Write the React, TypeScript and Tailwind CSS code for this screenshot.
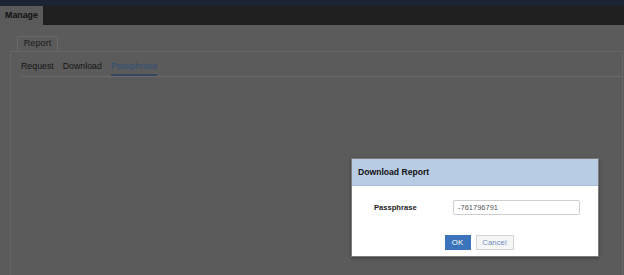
import React from "react";

export default function App() {
  return (
    <div
      className="relative h-[275px] w-[624px] overflow-hidden bg-[#5b5b5b] text-[#151515]"
      style={{ fontFamily: '"Liberation Sans", Arial, sans-serif' }}
    >
      {/* top navy strip */}
      <div className="h-[6px] bg-[#1b2434]" />
      {/* nav bar */}
      <div className="flex h-[19px] bg-[#1f1f1f]">
        <div className="flex w-[43px] items-center justify-center bg-[#5a5a5a] text-[8.8px] font-bold text-[#111]">
          Manage
        </div>
      </div>

      {/* content area */}
      <div className="flex h-[250px] flex-col pl-[10px] pt-[11px] pr-[1px]">
        <div className="flex pl-[7px]">
          <div className="flex h-[15px] w-[41px] items-center justify-center rounded-t-[2px] border border-b-0 border-[#6a6a6a] text-[9.2px] text-[#1c1c1c]">
            Report
          </div>
        </div>
        <div className="flex flex-1 flex-col border-l border-t border-r border-[#666666]">
          <div className="ml-[10px] flex h-[25px] items-end gap-[9px] border-b border-[#6a6a6a] text-[8.8px]">
            <div className="pb-[3px] text-[#151515]">Request</div>
            <div className="pb-[3px] text-[#151515]">Download</div>
            <div className="border-b-[2px] border-[#34495f] pb-[1px] text-[#30507a]">
              Passphrase
            </div>
          </div>
        </div>
      </div>

      {/* dialog */}
      <div className="absolute left-[351px] top-[158px] flex h-[99px] w-[248px] flex-col border border-[#7d7d7d] bg-white shadow-[0_1px_3px_rgba(0,0,0,0.35)]">
        <div className="flex h-[27px] items-center border-b border-[#a7bcd8] bg-[#b8cce4] pl-[6px] text-[8.6px] font-bold text-[#111]">
          Download Report
        </div>
        <div className="flex items-center pt-[14px]">
          <div className="w-[101px] pl-[22px] text-[7.6px] font-bold text-[#222]">
            Passphrase
          </div>
          <div className="flex h-[15px] w-[127px] items-center rounded-[2px] border border-[#cfcfcf] bg-white pl-[4px] text-[7.5px] text-[#555]">
            -761796791
          </div>
        </div>
        <div className="flex justify-center gap-[5px] pt-[20px] pl-[8px]">
          <div className="flex h-[15px] w-[26px] items-center justify-center bg-[#3b74bb] text-[7.8px] text-white">
            OK
          </div>
          <div className="flex h-[15px] w-[38px] items-center justify-center border border-[#d4d4d4] bg-[#f6f6f6] text-[7.8px] text-[#6b8dc0]">
            Cancel
          </div>
        </div>
      </div>
    </div>
  );
}
